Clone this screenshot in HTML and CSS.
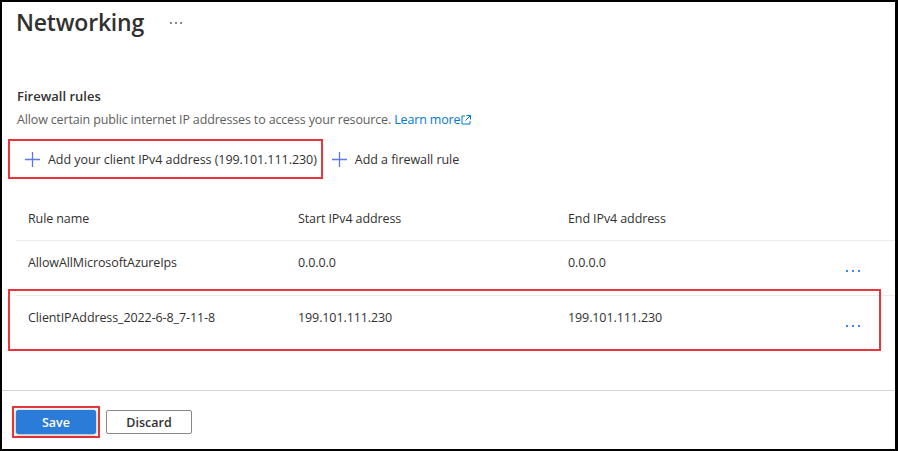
FILE: index.html
```html
<!DOCTYPE html>
<html>
<head>
<meta charset="utf-8">
<link rel="stylesheet" href="styles.css">
</head>
<body>
<div class="frame">
  <div class="content">
    <div class="title-row">
      <h1 class="title">Networking</h1>
      <svg class="more-gray" width="12" height="3" viewBox="0 0 12 3"><rect x="0" y="0" width="2" height="2" fill="#8a8886"/><rect x="5" y="0" width="2" height="2" fill="#8a8886"/><rect x="10" y="0" width="2" height="2" fill="#8a8886"/></svg>
    </div>

    <h2 class="section-title">Firewall rules</h2>
    <p class="desc">Allow certain public internet IP addresses to access your resource. <a class="link">Learn more<svg class="ext" width="10" height="10" viewBox="0 0 10 10"><path d="M4 1H1v8h8V6" fill="none" stroke="#0078d4" stroke-width="1"/><path d="M5.5 0.5h4v4M9.5 0.5L4.5 5.5" fill="none" stroke="#0078d4" stroke-width="1"/></svg></a></p>

    <div class="toolbar">
      <button class="cmd cmd-highlight">
        <svg class="plus" width="15" height="15" viewBox="0 0 15 15"><path d="M7.5 0v15M0 7.5h15" stroke="#5b78e6" stroke-width="1.3"/></svg>
        <span>Add your client IPv4 address (199.101.111.230)</span>
      </button>
      <button class="cmd cmd-plain">
        <svg class="plus" width="15" height="15" viewBox="0 0 15 15"><path d="M7.5 0v15M0 7.5h15" stroke="#5b78e6" stroke-width="1.3"/></svg>
        <span>Add a firewall rule</span>
      </button>
    </div>

    <div class="table">
      <div class="row head">
        <div class="cell">Rule name</div>
        <div class="cell">Start IPv4 address</div>
        <div class="cell">End IPv4 address</div>
        <div class="cell act"></div>
      </div>
      <div class="row">
        <div class="cell">AllowAllMicrosoftAzureIps</div>
        <div class="cell">0.0.0.0</div>
        <div class="cell">0.0.0.0</div>
        <div class="cell act"><svg width="14" height="2" viewBox="0 0 14 2"><rect x="0" y="0" width="2" height="2" fill="#3f8ae0"/><rect x="6" y="0" width="2" height="2" fill="#3f8ae0"/><rect x="12" y="0" width="2" height="2" fill="#3f8ae0"/></svg></div>
      </div>
      <div class="row">
        <div class="cell">ClientIPAddress_2022-6-8_7-11-8</div>
        <div class="cell">199.101.111.230</div>
        <div class="cell">199.101.111.230</div>
        <div class="cell act"><svg width="14" height="2" viewBox="0 0 14 2"><rect x="0" y="0" width="2" height="2" fill="#3f8ae0"/><rect x="6" y="0" width="2" height="2" fill="#3f8ae0"/><rect x="12" y="0" width="2" height="2" fill="#3f8ae0"/></svg></div>
      </div>
      <div class="row-highlight"></div>
    </div>
  </div>

  <div class="footer">
    <span class="save-highlight"><button class="btn primary">Save</button></span>
    <button class="btn secondary">Discard</button>
  </div>
</div>
</body>
</html>
```

FILE: styles.css
```css
* { box-sizing: border-box; }
html, body { margin: 0; padding: 0; background: #fff; }
body { font-family: "Open Sans", "Noto Sans", sans-serif; color: #323130; }

.frame {
  width: 898px;
  height: 451px;
  border: 2px solid #000;
  border-right-width: 3px;
  display: flex;
  flex-direction: column;
  background: #fff;
  overflow: hidden;
}

.content { flex: 1; }

.title-row {
  display: flex;
  align-items: center;
  gap: 26px;
  padding: 2px 0 0 14px;
  height: 38px;
}
.title {
  margin: 0;
  font-size: 23px;
  font-weight: 600;
  line-height: 32px;
  color: #323130;
  letter-spacing: -0.2px;
}
.more-gray { margin-top: 2px; }

.section-title {
  margin: 47px 0 0 15px;
  font-size: 13px;
  font-weight: 600;
  line-height: 18px;
  color: #323130;
}
.desc {
  margin: 6px 0 0 15px;
  font-size: 12.5px;
  line-height: 18px;
  color: #605e5c;
  letter-spacing: -0.15px;
}
.link { color: #0078d4; text-decoration: none; }
.ext { margin-left: 1px; vertical-align: -1px; }

.toolbar {
  display: flex;
  align-items: center;
  margin: 10px 0 0 6px;
}
.cmd {
  display: flex;
  align-items: center;
  gap: 8px;
  height: 40px;
  padding: 0 6px 0 15px;
  background: none;
  border: 2px solid transparent;
  font-family: inherit;
  font-size: 12.5px;
  color: #323130;
  letter-spacing: -0.05px;
}
.cmd-highlight { border-color: #e8373b; padding-right: 4px; }
.cmd-plain { padding-left: 7px; }
.cmd .plus { flex: none; }

.table {
  position: relative;
  margin: 17px 0 0 14px;
}
.row {
  display: grid;
  grid-template-columns: 270px 270px 270px 1fr;
  height: 55px;
  border-top: 1px solid #edebe9;
  font-size: 12.5px;
  letter-spacing: -0.1px;
  color: #323130;
}
.row.head {
  border-top: none;
  height: 44px;
}
.row.head .cell { padding-top: 14px; }
.cell { padding: 13px 0 0 12px; line-height: 18px; white-space: nowrap; }
.cell.act { padding: 0 0 0 20px; display: flex; align-items: center; margin-top: 5px; }
.row.head .cell.act { padding-top: 0; }

.row-highlight {
  position: absolute;
  left: -8px;
  top: 93px;
  width: 873px;
  height: 62px;
  border: 2px solid #e8373b;
}

.footer {
  height: 59px;
  border-top: 1px solid #d7d5d3;
  display: flex;
  align-items: center;
  gap: 6px;
  padding: 4px 0 0 10px;
}
.save-highlight {
  display: inline-flex;
  padding: 2px;
  border: 2px solid #e8373b;
}
.btn {
  height: 24px;
  font-family: inherit;
  font-size: 12.5px;
  font-weight: 600;
  border-radius: 2px;
  padding: 0;
}
.primary {
  width: 80px;
  background: #2b7bd8;
  color: #fff;
  border: 1px solid #2b7bd8;
  box-shadow: 0 1px 4px rgba(0,0,0,0.35);
}
.secondary {
  width: 86px;
  background: #fff;
  color: #323130;
  border: 1px solid #8a8886;
}
```
